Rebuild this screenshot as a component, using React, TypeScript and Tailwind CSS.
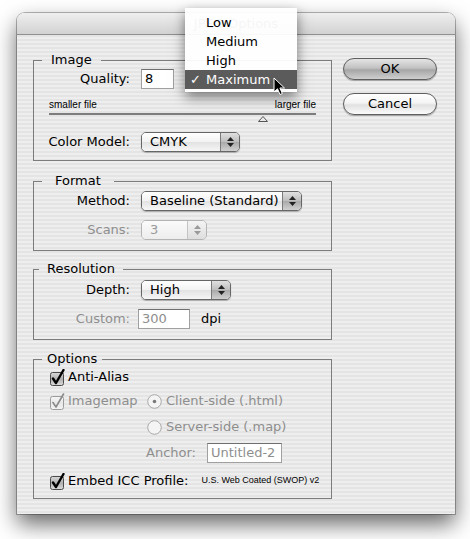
import React from "react";

const stripes =
  "bg-[repeating-linear-gradient(180deg,#eeeeee_0px,#eeeeee_2px,#e4e4e4_2px,#e4e4e4_4px)]";

function Group({
  title,
  legendClass,
  className,
  children,
}: {
  title: string;
  legendClass: string;
  className: string;
  children: React.ReactNode;
}) {
  return (
    <fieldset className={`border border-[#7c7c7c] ${className}`}>
      <legend className={`leading-[16px] text-[13px] text-black ${legendClass}`}>
        {title}
      </legend>
      {children}
    </fieldset>
  );
}

function Select({
  value,
  width,
  disabled,
}: {
  value: string;
  width: string;
  disabled?: boolean;
}) {
  return (
    <div
      className={`flex h-[20px] ${width} rounded-[5px] border ${
        disabled
          ? "border-[#b4b4b4] text-[#9a9a9a]"
          : "border-[#666666] text-black shadow-[0_1px_1px_rgba(0,0,0,0.25)]"
      } overflow-hidden`}
    >
      <div
        className={`flex-1 pl-[8px] leading-[18px] text-[13px] ${
          disabled
            ? "bg-[linear-gradient(180deg,#fbfbfb,#ededed)]"
            : "bg-[linear-gradient(180deg,#ffffff_0%,#f2f2f2_50%,#e2e2e2_51%,#f6f6f6_100%)]"
        }`}
      >
        {value}
      </div>
      <div
        className={`w-[19px] flex flex-col items-center justify-center gap-[2px] border-l ${
          disabled
            ? "border-[#c4c4c4] bg-[linear-gradient(180deg,#f4f4f4,#dedede)]"
            : "border-[#7a7a7a] bg-[linear-gradient(180deg,#e0e0e0_0%,#bdbdbd_50%,#a9a9a9_51%,#d0d0d0_100%)]"
        }`}
      >
        <svg width="7" height="4" viewBox="0 0 7 4">
          <path d="M3.5 0 L7 4 L0 4 Z" fill={disabled ? "#9a9a9a" : "#222"} />
        </svg>
        <svg width="7" height="4" viewBox="0 0 7 4">
          <path d="M0 0 L7 0 L3.5 4 Z" fill={disabled ? "#9a9a9a" : "#222"} />
        </svg>
      </div>
    </div>
  );
}

function TextBox({
  value,
  width,
  disabled,
}: {
  value: string;
  width: string;
  disabled?: boolean;
}) {
  return (
    <div
      className={`h-[20px] ${width} bg-white border border-[#a0a0a0] border-t-[#6f6f6f] pl-[3px] leading-[18px] text-[13px] ${
        disabled ? "text-[#8e8e8e]" : "text-black"
      }`}
    >
      {value}
    </div>
  );
}

function CheckBox({ disabled }: { disabled?: boolean }) {
  const stroke = disabled ? "#9c9c9c" : "#4a4a4a";
  const mark = disabled ? "#8a8a8a" : "#000";
  return (
    <svg width="16" height="17" viewBox="0 0 16 17" className="shrink-0">
      <defs>
        <linearGradient id={disabled ? "cbd" : "cb"} x1="0" y1="0" x2="0" y2="1">
          <stop offset="0" stopColor={disabled ? "#f6f6f6" : "#d8d8d8"} />
          <stop offset="0.5" stopColor={disabled ? "#e8e8e8" : "#b0b0b0"} />
          <stop offset="1" stopColor={disabled ? "#f2f2f2" : "#dcdcdc"} />
        </linearGradient>
      </defs>
      <rect
        x="0.5"
        y="3.5"
        width="13"
        height="13"
        rx="2"
        fill={`url(#${disabled ? "cbd" : "cb"})`}
        stroke={stroke}
      />
      <path
        d="M3 9.5 L6 14 L13.5 1"
        fill="none"
        stroke={mark}
        strokeWidth={disabled ? 1.6 : 2.4}
        strokeLinecap="round"
        strokeLinejoin="round"
      />
    </svg>
  );
}

function Radio({ selected }: { selected?: boolean }) {
  return (
    <svg width="15" height="15" viewBox="0 0 15 15" className="shrink-0">
      <circle cx="7.5" cy="7.5" r="6.8" fill="#f4f4f4" stroke="#a8a8a8" />
      {selected && <circle cx="7.5" cy="7.5" r="1.8" fill="#7a7a7a" />}
    </svg>
  );
}

function Button({ label, primary }: { label: string; primary?: boolean }) {
  return (
    <div
      className={`h-[22px] w-[94px] rounded-full border border-[#5e5e5e] text-center leading-[20px] text-[13px] text-black shadow-[0_1px_1px_rgba(0,0,0,0.3)] ${
        primary
          ? "bg-[linear-gradient(180deg,#e4e4e4_0%,#c2c2c2_45%,#a6a6a6_55%,#cfcfcf_100%)]"
          : "bg-[linear-gradient(180deg,#ffffff_0%,#f4f4f4_45%,#e1e1e1_55%,#fbfbfb_100%)]"
      }`}
    >
      {label}
    </div>
  );
}

function Row({
  label,
  disabled,
  children,
  className,
}: {
  label: string;
  disabled?: boolean;
  children: React.ReactNode;
  className: string;
}) {
  return (
    <div className={`flex items-center ${className}`}>
      <div
        className={`w-[96px] text-right text-[13px] ${
          disabled ? "text-[#8e8e8e]" : "text-black"
        }`}
      >
        {label}
      </div>
      <div className="ml-[11px] flex items-center">{children}</div>
    </div>
  );
}

export default function App() {
  return (
    <div className="relative w-[470px] h-[539px] overflow-hidden bg-white font-['DejaVu_Sans',sans-serif] text-black">
      <div
        className={`ml-[17px] mt-[13px] w-[438px] h-[501px] rounded-t-[8px] flex flex-col ${stripes} shadow-[0_0_0_1px_rgba(0,0,0,0.28),0_10px_22px_rgba(0,0,0,0.6)]`}
      >
        <div className="h-[22px] rounded-t-[8px] border-b border-[#8f8f8f] bg-[linear-gradient(180deg,#efefef,#d2d2d2)] text-center text-[13px] leading-[22px] text-[#5a5a5a]">
          JPEG Options
        </div>

        <div className="flex pl-[16px]">
          <div className="w-[299px] flex flex-col">
            <Group
              title="Image"
              legendClass="ml-[8px] px-[9px]"
              className="mt-[17px] h-[109px] pb-[9px]"
            >
              <Row label="Quality:" className="mt-[1px] h-[20px]">
                <TextBox value="8" width="w-[33px]" />
              </Row>
              <div className="px-[15px] mt-[10px]">
                <div className="flex justify-between h-[12px] leading-[12px] font-['Liberation_Sans',sans-serif] text-[10px]">
                  <span>smaller file</span>
                  <span>larger file</span>
                </div>
                <div className="mt-[2px] h-[2px] bg-[#7d7d7d]" />
                <svg width="10" height="6" viewBox="0 0 10 6" className="ml-[209px] mt-[1px] block">
                  <path d="M5 0.5 L9.5 5.5 L0.5 5.5 Z" fill="#e8e8e8" stroke="#555" />
                </svg>
              </div>
              <Row label="Color Model:" className="mt-[10px] h-[20px]">
                <Select value="CMYK" width="w-[99px]" />
              </Row>
            </Group>

            <Group
              title="Format"
              legendClass="ml-[8px] px-[13px]"
              className="mt-[12px] h-[78px]"
            >
              <Row label="Method:" className="mt-[2px] h-[20px]">
                <Select value="Baseline (Standard)" width="w-[161px]" />
              </Row>
              <Row label="Scans:" disabled className="mt-[9px] h-[20px]">
                <Select value="3" width="w-[66px]" disabled />
              </Row>
            </Group>

            <Group
              title="Resolution"
              legendClass="ml-[5px] px-[8px]"
              className="mt-[10px] h-[79px]"
            >
              <Row label="Depth:" className="mt-[3px] h-[20px]">
                <Select value="High" width="w-[90px]" />
              </Row>
              <Row label="Custom:" disabled className="mt-[9px] h-[20px]">
                <div className="-ml-[3px] flex items-center">
                  <TextBox value="300" width="w-[52px]" disabled />
                  <span className="ml-[11px] text-[13px] text-black">dpi</span>
                </div>
              </Row>
            </Group>

            <Group
              title="Options"
              legendClass="ml-[8px] px-[5px]"
              className="mt-[11px] h-[148px]"
            >
              <div className="pl-[16px] text-[13px]">
                <div className="mt-[2px] h-[16px] flex items-center gap-[2px]">
                  <CheckBox />
                  <span>Anti-Alias</span>
                </div>
                <div className="mt-[8px] h-[16px] flex items-center">
                  <div className="w-[97px] flex items-center gap-[2px] text-[#8e8e8e]">
                    <CheckBox disabled />
                    <span>Imagemap</span>
                  </div>
                  <Radio selected />
                  <span className="ml-[4px] text-[#8e8e8e]">Client-side (.html)</span>
                </div>
                <div className="mt-[10px] h-[16px] flex items-center pl-[97px]">
                  <Radio />
                  <span className="ml-[4px] text-[#8e8e8e]">Server-side (.map)</span>
                </div>
                <div className="mt-[8px] h-[20px] flex items-center">
                  <span className="w-[146px] text-right text-[#8e8e8e]">Anchor:</span>
                  <div className="ml-[11px]">
                    <TextBox value="Untitled-2" width="w-[75px]" disabled />
                  </div>
                </div>
                <div className="mt-[10px] h-[16px] flex items-center gap-[2px]">
                  <CheckBox />
                  <span>Embed ICC Profile:</span>
                  <span className="ml-[11px] font-['Liberation_Sans',sans-serif] text-[9px]">
                    U.S. Web Coated (SWOP) v2
                  </span>
                </div>
              </div>
            </Group>
          </div>

          <div className="ml-[11px] pt-[23px] flex flex-col gap-[13px]">
            <Button label="OK" primary />
            <Button label="Cancel" />
          </div>
        </div>
      </div>

      <div className="absolute left-[185px] top-[8px] w-[112px] h-[84px] pt-[5px] bg-white/[0.94] shadow-[0_5px_12px_rgba(0,0,0,0.5)] text-[13px]">
        {["Low", "Medium", "High", "Maximum"].map((item) => (
          <div
            key={item}
            className={`flex h-[19px] leading-[19px] pl-[5px] ${
              item === "Maximum" ? "bg-[#5b5b5b] text-white" : "text-black"
            }`}
          >
            <span className="w-[16px]">{item === "Maximum" ? "✓" : ""}</span>
            <span>{item}</span>
          </div>
        ))}
      </div>

      <svg
        width="13"
        height="19"
        viewBox="0 0 13 19"
        className="absolute left-[273px] top-[77px]"
      >
        <path
          d="M1 1 L1 15 L4.5 11.8 L7 17.5 L9.3 16.5 L6.9 11 L11.5 11 Z"
          fill="#000"
          stroke="#fff"
          strokeWidth="1"
          strokeLinejoin="round"
        />
      </svg>
    </div>
  );
}
